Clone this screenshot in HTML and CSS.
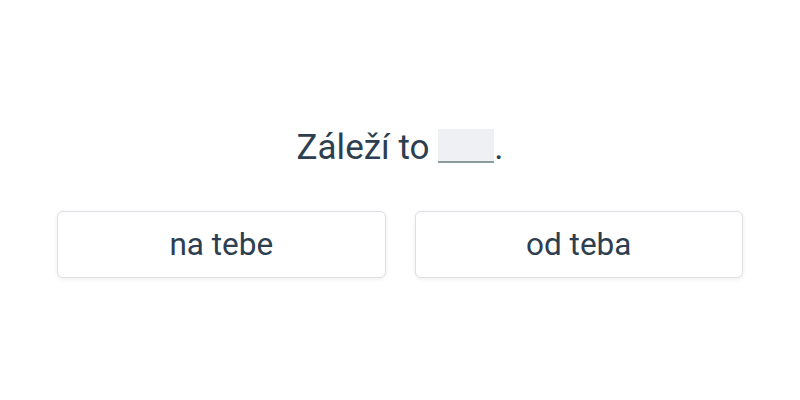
FILE: index.html
```html
<!DOCTYPE html>
<html lang="sk">
<head>
<meta charset="utf-8">
<link rel="stylesheet" href="styles.css">
</head>
<body>
<main class="quiz">
  <p class="sentence">Záleží to <span class="blank"></span>.</p>
  <div class="options">
    <button class="option">na tebe</button>
    <button class="option">od teba</button>
  </div>
</main>
</body>
</html>
```
FILE: styles.css
```css
html, body {
  margin: 0;
  padding: 0;
  background: #ffffff;
}
body {
  height: 400px;
  display: flex;
  align-items: center;
  justify-content: center;
  font-family: Roboto, "Noto Sans", sans-serif;
  color: #2c3e50;
}
.quiz {
  width: 686px;
  display: flex;
  flex-direction: column;
  align-items: center;
  gap: 42px;
  margin-top: 4px;
}
.sentence {
  margin: 0;
  font-size: 35px;
  line-height: 42px;
}
.blank {
  display: inline-block;
  width: 56px;
  height: 32px;
  background: #eef0f3;
  border-bottom: 2px solid #8a9d9a;
  vertical-align: -4px;
}
.options {
  width: 100%;
  display: grid;
  grid-template-columns: 1fr 1fr;
  gap: 29px;
}
.option {
  height: 67px;
  background: #ffffff;
  border: 1px solid #dcdfe3;
  border-radius: 6px;
  box-shadow: 0 1px 4px rgba(0, 0, 0, 0.08);
  font-family: Roboto, "Noto Sans", sans-serif;
  font-size: 31.5px;
  color: #2c3e50;
  padding: 0;
}
```
